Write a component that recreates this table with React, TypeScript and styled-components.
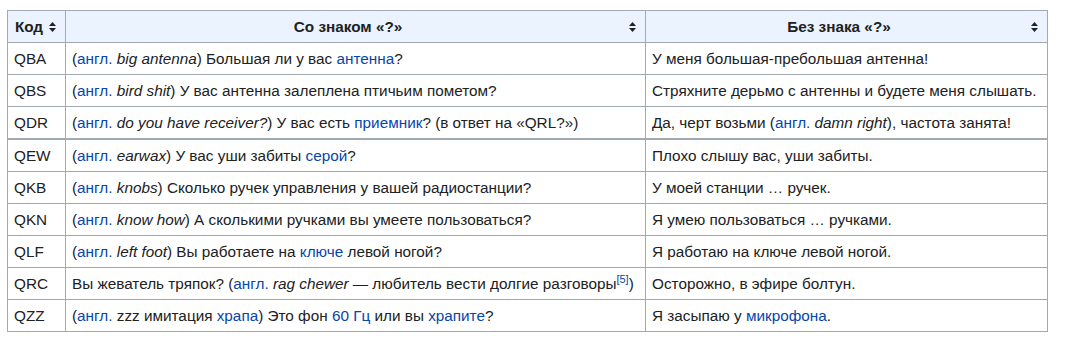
import React, { FC, ReactNode } from 'react';
import styled, { createGlobalStyle } from 'styled-components';

const colors = {
  text: '#202122',
  link: '#0645ad',
  border: '#a2a9b1',
  head: '#eaf3ff',
};

const Global = createGlobalStyle`
  body {
    margin:0;
    padding:10px 0 0 7px;
    background:#fff;
    font-family:"Liberation Sans", Arial, sans-serif;
    color:${colors.text};
  }
`;

const Table = styled.table`
  width:1040px;
  table-layout:fixed;
  border-collapse:collapse;
  font-size:15.3px;
  line-height:23px;
  th, td {
    border:1px solid ${colors.border};
    padding:4px 6px;
    white-space:nowrap;
    overflow:hidden;
  }
`;

const HeadCell = styled.th`
  position:relative;
  background:${colors.head};
  font-weight:bold;
  text-align:center;
  padding-right:21px !important;
`;

const Row = styled.tr<{ $thick?: boolean }>`
  td {
    border-bottom-width:${p => (p.$thick ? '2px' : '1px')};
  }
`;

const Link = styled.a`
  color:${colors.link};
  text-decoration:none;
`;

const Eng = styled.i`
  font-style:italic;
`;

const Ref = styled.sup`
  font-size:11px;
  line-height:1;
  color:${colors.link};
`;

const SortIcon = styled.svg`
  position:absolute;
  right:9px;
  top:50%;
  margin-top:-5px;
`;

const Sort: FC = () => (
  <SortIcon width="7" height="10" viewBox="0 0 7 10">
    <path d="M3.5 0 L7 4 L0 4 Z M0 6 L7 6 L3.5 10 Z" fill="#202122" />
  </SortIcon>
);

const En: FC<{ children: ReactNode }> = ({ children }) => (
  <>
    (<Link>англ.</Link> <Eng>{children}</Eng>)
  </>
);

interface IRow {
  code: string;
  q: ReactNode;
  a: ReactNode;
  thick?: boolean;
}

const rows: IRow[] = [
  {
    code: 'QBA',
    q: <><En>big antenna</En> Большая ли у вас <Link>антенна</Link>?</>,
    a: <>У меня большая-пребольшая антенна!</>,
  },
  {
    code: 'QBS',
    q: <><En>bird shit</En> У вас антенна залеплена птичьим пометом?</>,
    a: <>Стряхните дерьмо с антенны и будете меня слышать.</>,
  },
  {
    code: 'QDR',
    q: <><En>do you have receiver?</En> У вас есть <Link>приемник</Link>? (в ответ на «QRL?»)</>,
    a: <>Да, черт возьми (<Link>англ.</Link> <Eng>damn right</Eng>), частота занята!</>,
    thick: true,
  },
  {
    code: 'QEW',
    q: <><En>earwax</En> У вас уши забиты <Link>серой</Link>?</>,
    a: <>Плохо слышу вас, уши забиты.</>,
  },
  {
    code: 'QKB',
    q: <><En>knobs</En> Сколько ручек управления у вашей радиостанции?</>,
    a: <>У моей станции … ручек.</>,
  },
  {
    code: 'QKN',
    q: <><En>know how</En> А сколькими ручками вы умеете пользоваться?</>,
    a: <>Я умею пользоваться … ручками.</>,
  },
  {
    code: 'QLF',
    q: <><En>left foot</En> Вы работаете на <Link>ключе</Link> левой ногой?</>,
    a: <>Я работаю на ключе левой ногой.</>,
  },
  {
    code: 'QRC',
    q: <>Вы жеватель тряпок? (<Link>англ.</Link> <Eng>rag chewer</Eng> — любитель вести долгие разговоры<Ref>[5]</Ref>)</>,
    a: <>Осторожно, в эфире болтун.</>,
  },
  {
    code: 'QZZ',
    q: <>(<Link>англ.</Link> zzz имитация <Link>храпа</Link>) Это фон <Link>60 Гц</Link> или вы <Link>храпите</Link>?</>,
    a: <>Я засыпаю у <Link>микрофона</Link>.</>,
  },
];

const App: FC = () => (
  <>
    <Global />
    <Table>
      <colgroup>
        <col style={{ width: 58 }} />
        <col style={{ width: 580 }} />
        <col style={{ width: 402 }} />
      </colgroup>
      <thead>
        <tr>
          <HeadCell>Код<Sort /></HeadCell>
          <HeadCell>Со знаком «?»<Sort /></HeadCell>
          <HeadCell>Без знака «?»<Sort /></HeadCell>
        </tr>
      </thead>
      <tbody>
        {rows.map(r => (
          <Row key={r.code} $thick={r.thick}>
            <td>{r.code}</td>
            <td>{r.q}</td>
            <td>{r.a}</td>
          </Row>
        ))}
      </tbody>
    </Table>
  </>
);

export default App;
